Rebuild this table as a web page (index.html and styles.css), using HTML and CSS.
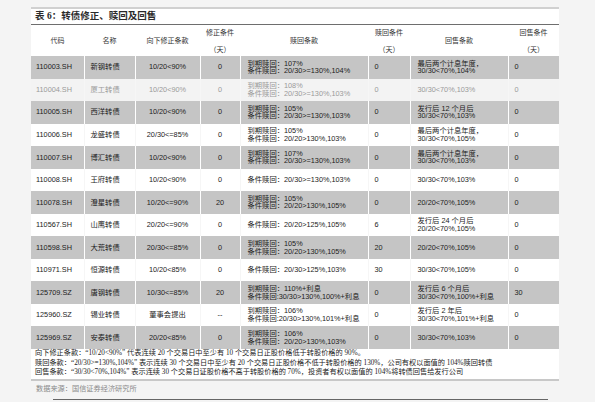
FILE: index.html
```html
<!DOCTYPE html>
<html lang="zh-CN">
<head>
<meta charset="utf-8">
<title>转债修正、赎回及回售</title>
<link rel="stylesheet" href="styles.css">
</head>
<body>
<div class="page">
  <div class="doc">
    <div class="title">表 6：转债修正、赎回及回售</div>
    <table class="grid">
      <colgroup>
        <col class="c1"><col class="c2"><col class="c3"><col class="c4"><col class="c5"><col class="c6"><col class="c7"><col class="c8">
      </colgroup>
      <thead>
        <tr>
          <th>代码</th>
          <th>名称</th>
          <th>向下修正条款</th>
          <th><span class="l1">修正条件</span><span class="l2">（天）</span></th>
          <th>赎回条款</th>
          <th><span class="l1">赎回条件</span><span class="l2">（天）</span></th>
          <th>回售条款</th>
          <th><span class="l1">回售条件</span><span class="l2">（天）</span></th>
        </tr>
      </thead>
      <tbody>
        <tr class="g">
          <td class="code">110003.SH</td><td class="name">新钢转债</td><td class="ctr">10/20&lt;90%</td><td class="ctr">0</td>
          <td class="txt"><span>到期赎回：107%</span><span>条件赎回：20/30&gt;=130%,104%</span></td>
          <td class="num">0</td>
          <td class="txt"><span>最后两个计息年度，</span><span>30/30&lt;70%,104%</span></td>
          <td class="num">0</td>
        </tr>
        <tr class="f">
          <td class="code">110004.SH</td><td class="name">厦工转债</td><td class="ctr">10/20&lt;90%</td><td class="ctr">0</td>
          <td class="txt"><span>到期赎回：108%</span><span>条件赎回：20/30&gt;=130%,103%</span></td>
          <td class="num">0</td>
          <td class="txt"><span>30/30&lt;70%,103%</span></td>
          <td class="num">0</td>
        </tr>
        <tr class="g">
          <td class="code">110005.SH</td><td class="name">西洋转债</td><td class="ctr">10/20&lt;90%</td><td class="ctr">0</td>
          <td class="txt"><span>到期赎回：105%</span><span>条件赎回：20/30&gt;=130%,103%</span></td>
          <td class="num">0</td>
          <td class="txt"><span>发行后 12 个月后</span><span>30/30&lt;70%,103%</span></td>
          <td class="num">0</td>
        </tr>
        <tr class="w">
          <td class="code">110006.SH</td><td class="name">龙盛转债</td><td class="ctr">20/30&lt;=85%</td><td class="ctr">0</td>
          <td class="txt"><span>到期赎回：105%</span><span>条件赎回：20/20&gt;130%,103%</span></td>
          <td class="num">0</td>
          <td class="txt"><span>最后两个计息年度，</span><span>30/30&lt;70%,105%</span></td>
          <td class="num">0</td>
        </tr>
        <tr class="g">
          <td class="code">110007.SH</td><td class="name">博汇转债</td><td class="ctr">10/20&lt;90%</td><td class="ctr">0</td>
          <td class="txt"><span>到期赎回：107%</span><span>条件赎回：20/30&gt;=130%,103%</span></td>
          <td class="num">0</td>
          <td class="txt"><span>最后两个计息年度，</span><span>30/30&lt;70%,103%</span></td>
          <td class="num">0</td>
        </tr>
        <tr class="w">
          <td class="code">110008.SH</td><td class="name">王府转债</td><td class="ctr">10/20&lt;90%</td><td class="ctr">0</td>
          <td class="txt"><span>条件赎回：20/30&gt;=130%,103%</span></td>
          <td class="num">0</td>
          <td class="txt"><span>30/30&lt;70%,103%</span></td>
          <td class="num">0</td>
        </tr>
        <tr class="g">
          <td class="code">110078.SH</td><td class="name">澄星转债</td><td class="ctr">10/20&lt;=90%</td><td class="ctr">20</td>
          <td class="txt"><span>到期赎回：105%</span><span>条件赎回：20/20&gt;130%,105%</span></td>
          <td class="num">0</td>
          <td class="txt"><span>20/20&lt;70%,105%</span></td>
          <td class="num">0</td>
        </tr>
        <tr class="w">
          <td class="code">110567.SH</td><td class="name">山鹰转债</td><td class="ctr">20/20&lt;=90%</td><td class="ctr">0</td>
          <td class="txt"><span>条件赎回：20/20&gt;125%,105%</span></td>
          <td class="num">6</td>
          <td class="txt"><span>发行后 24 个月后</span><span>20/20&lt;70%,105%</span></td>
          <td class="num">0</td>
        </tr>
        <tr class="g">
          <td class="code">110598.SH</td><td class="name">大荒转债</td><td class="ctr">20/30&lt;=85%</td><td class="ctr">0</td>
          <td class="txt"><span>到期赎回：105%</span><span>条件赎回：20/20&gt;130%,105%</span></td>
          <td class="num">20</td>
          <td class="txt"><span>20/20&lt;70%,105%</span></td>
          <td class="num">0</td>
        </tr>
        <tr class="w">
          <td class="code">110971.SH</td><td class="name">恒源转债</td><td class="ctr">10/20&lt;85%</td><td class="ctr">0</td>
          <td class="txt"><span>条件赎回：20/30&gt;125%,103%</span></td>
          <td class="num">30</td>
          <td class="txt"><span>30/30&lt;70%,105%</span></td>
          <td class="num">0</td>
        </tr>
        <tr class="g">
          <td class="code">125709.SZ</td><td class="name">唐钢转债</td><td class="ctr">10/30&lt;=85%</td><td class="ctr">20</td>
          <td class="txt"><span>到期赎回：110%+利息</span><span>条件赎回:30/30&gt;130%,100%+利息</span></td>
          <td class="num">0</td>
          <td class="txt"><span>发行后 6 个月后</span><span>30/30&lt;70%,100%+利息</span></td>
          <td class="num">30</td>
        </tr>
        <tr class="w">
          <td class="code">125960.SZ</td><td class="name">锡业转债</td><td class="ctr">董事会提出</td><td class="ctr">--</td>
          <td class="txt"><span>到期赎回：106%</span><span>条件赎回:20/30&gt;130%,101%+利息</span></td>
          <td class="num">0</td>
          <td class="txt"><span>发行后 2 年后</span><span>30/30&lt;70%,101%+利息</span></td>
          <td class="num">0</td>
        </tr>
        <tr class="g">
          <td class="code">125969.SZ</td><td class="name">安泰转债</td><td class="ctr">20/20&lt;85%</td><td class="ctr">0</td>
          <td class="txt"><span>到期赎回：106%</span><span>条件赎回：20/20&gt;130%,103%</span></td>
          <td class="num">0</td>
          <td class="txt"><span>30/30&lt;70%,103%</span></td>
          <td class="num">0</td>
        </tr>
      </tbody>
    </table>
    <div class="notes">
      <p>向下修正条款：“10/20&lt;90%” 代表连续 20 个交易日中至少有 10 个交易日正股价格低于转股价格的 90%。</p>
      <p>赎回条款：“20/30&gt;=130%,104%” 表示连续 30 个交易日中至少有 20 个交易日正股价格不低于转股价格的 130%，公司有权以面值的 104%赎回转债</p>
      <p>回售条款：“30/30&lt;70%,104%” 表示连续 30 个交易日证股价格不高于转股价格的 70%，投资者有权以面值的 104%将转债回售给发行公司</p>
    </div>
  </div>
  <div class="source">数据来源：国信证券经济研究所</div>
  <div class="rule"></div>
</div>
</body>
</html>
```
FILE: styles.css
```css
html, body {
  margin: 0;
  padding: 0;
  background: #f4f4f4;
}
.page {
  width: 595px;
  height: 402px;
  overflow: hidden;
  padding-top: 7px;
  box-sizing: border-box;
  font-family: "Liberation Sans", "Noto Sans CJK SC", sans-serif;
  color: #1c1c1c;
}
.doc {
  margin-left: 31px;
  width: 528px;
  background: #fff;
  border-top: 2px solid #d0d0d0;
  border-bottom: 2px solid #c8c8c8;
}
.title {
  height: 15px;
  line-height: 14px;
  font-family: "Liberation Serif", "Noto Sans CJK SC", serif;
  font-size: 9.5px;
  font-weight: bold;
  padding-left: 4px;
  border-bottom: 1px solid #6e6e6e;
  color: #2a2a2a;
}
.grid {
  width: 528px;
  border-collapse: collapse;
  table-layout: fixed;
  font-size: 7.3px;
}
.c1 { width: 53px; }
.c2 { width: 51px; }
.c3 { width: 65px; }
.c4 { width: 40px; }
.c5 { width: 128px; }
.c6 { width: 42px; }
.c7 { width: 98px; }
.c8 { width: 51px; }
.grid th {
  height: 31px;
  padding: 0;
  font-weight: normal;
  font-size: 7px;
  color: #333;
  text-align: center;
  vertical-align: middle;
  line-height: 9px;
}
.grid th .l1, .grid th .l2 {
  display: block;
}
.grid th .l2 {
  margin-top: 8px;
}
.grid td {
  height: 22.54px;
  padding: 0;
  vertical-align: middle;
  line-height: 7.7px;
  white-space: nowrap;
  overflow: hidden;
  border-left: 1px solid rgba(0, 0, 0, 0.035);
}
.grid td:first-child {
  border-left: none;
}
.grid tr.g td {
  background: #c5c5c5;
  border-left-color: rgba(255, 255, 255, 0.35);
}
.grid tr.f td {
  background: #f3f3f3;
  color: #9a9a9a;
}
.grid tr.w td {
  background: #fff;
}
.grid td.code { padding-left: 5px; }
.grid td.name { padding-left: 6px; }
.grid td.ctr { text-align: center; }
.grid td.txt { padding-left: 7px; }
.grid td.num { padding-left: 6px; }
.grid td.txt span {
  display: block;
}
.notes {
  padding: 0 0 1px 4px;
  font-family: "Liberation Serif", "Noto Sans CJK SC", serif;
  font-size: 7.2px;
  color: #222;
}
.notes p {
  margin: 0;
  line-height: 9.7px;
  white-space: nowrap;
}
.source {
  margin: 3px 0 0 36px;
  line-height: 10px;
  font-size: 7.2px;
  color: #8a8a8a;
}
.rule {
  margin: 5px 0 0 53px;
  width: 495px;
  border-top: 1px solid #666;
}
```
